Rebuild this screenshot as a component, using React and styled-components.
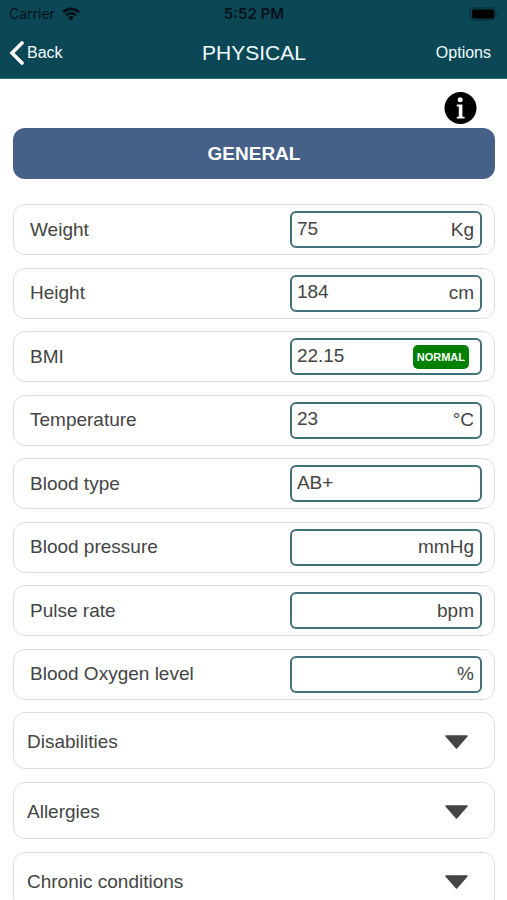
import React, { useState } from "react";
import styled, { createGlobalStyle } from "styled-components";

const GlobalStyle = createGlobalStyle`
  *, *::before, *::after { box-sizing: border-box; }
  body {
    margin: 0;
    background: #fff;
    color: #444;
    font-family: "Liberation Sans", Arial, sans-serif;
  }
  button, input { font: inherit; color: inherit; }
`;

const Screen = styled.div`
  display: flex;
  flex-direction: column;
  height: 100vh;
  overflow: hidden;
`;

const Header = styled.header`
  flex: none;
  background: #0c4756;
  border-bottom: 1px solid #35707c;
`;

const StatusBar = styled.div`
  display: grid;
  grid-template-columns: 1fr auto 1fr;
  align-items: center;
  height: 27px;
  padding: 0 8px 0 9px;
  color: #02121a;
  font-family: Inter, sans-serif;
  font-size: 14px;
  line-height: 18px;
`;

const Carrier = styled.div`
  display: flex;
  align-items: center;
  gap: 7px;
`;

const Clock = styled.time`
  font-size: 15px;
  font-weight: 600;
`;

const Battery = styled.svg`
  justify-self: end;
`;

const NavBar = styled.nav`
  display: grid;
  grid-template-columns: 1fr auto 1fr;
  align-items: center;
  height: 51px;
  padding: 0 16px 0 9px;
  color: #f0fbff;
`;

const NavButton = styled.button`
  display: flex;
  align-items: center;
  gap: 3px;
  justify-self: ${(p) => (p.$end ? "end" : "start")};
  padding: 0;
  border: 0;
  background: none;
  font-size: 16px;
  line-height: 24px;
  cursor: pointer;
`;

const Title = styled.h1`
  margin: 0;
  padding-left: 8px;
  font-size: 21px;
  font-weight: 400;
  line-height: 24px;
`;

const Content = styled.main`
  flex: 1;
  min-height: 0;
  padding: 12px 12px 24px 13px;
  overflow-y: auto;
  scrollbar-width: none;
`;

const InfoButton = styled.button`
  display: block;
  margin: 0 18px 3px auto;
  padding: 0;
  border: 0;
  background: none;
  cursor: pointer;

  svg { display: block; }
`;

const SectionTitle = styled.h2`
  margin: 0 0 25px;
  padding: 14px 14px 13px;
  border-radius: 12px;
  background: #466087;
  color: #fff;
  font-size: 19px;
  font-weight: 700;
  line-height: 24px;
  text-align: center;
`;

const Fields = styled.div`
  display: grid;
  align-content: space-between;
  min-height: 496px;
  margin-bottom: 12px;
`;

const Card = styled.div`
  border: 1px solid #dedede;
  border-radius: 12px;
  background: #fff;
  font-size: 19px;
  line-height: 24px;
`;

const FieldCard = styled(Card)`
  display: grid;
  grid-template-columns: minmax(0, 23fr) minmax(0, 17fr);
  align-items: center;
  height: 51px;
  padding: 0 12px 0 16px;
`;

const InputBox = styled.div`
  display: flex;
  align-items: center;
  height: 37px;
  padding: 0 6px 0 5px;
  border: 2px solid #417078;
  border-radius: 6px;
`;

const ValueInput = styled.input`
  flex: 1;
  min-width: 0;
  height: 24px;
  padding: 0 0 2px;
  border: 0;
  outline: 0;
  background: transparent;
`;

const Unit = styled.span`
  flex: none;
`;

const StatusTag = styled.span`
  flex: none;
  margin-right: 5px;
  padding: 0 4px;
  border-radius: 5px;
  background: #008000;
  color: #fff;
  font-size: 11px;
  font-weight: 700;
  line-height: 24px;
`;

const Groups = styled.div`
  display: grid;
  gap: 13px;
`;

const GroupButton = styled(Card).attrs({ as: "button", type: "button" })`
  display: flex;
  align-items: center;
  justify-content: space-between;
  width: 100%;
  height: 57px;
  padding: 2px 26px 0 13px;
  text-align: left;
  cursor: pointer;
`;

const Arrow = styled.svg`
  transform: ${(p) => (p.$open ? "rotate(180deg)" : "none")};
`;

const fields = [
  { id: "weight", label: "Weight", value: "75", unit: "Kg" },
  { id: "height", label: "Height", value: "184", unit: "cm" },
  { id: "bmi", label: "BMI", value: "22.15", tag: "NORMAL" },
  { id: "temperature", label: "Temperature", value: "23", unit: "°C" },
  { id: "blood-type", label: "Blood type", value: "AB+" },
  { id: "blood-pressure", label: "Blood pressure", value: "", unit: "mmHg" },
  { id: "pulse", label: "Pulse rate", value: "", unit: "bpm" },
  { id: "oxygen", label: "Blood Oxygen level", value: "", unit: "%" },
];

const groups = ["Disabilities", "Allergies", "Chronic conditions"];

function WifiIcon() {
  return (
    <svg width="18" height="14" viewBox="0 0 18 14" aria-hidden="true">
      <g fill="none" stroke="currentColor" strokeWidth="2.6">
        <path d="M1 5.2C5.5.8 12.5.8 17 5.2" />
        <path d="M4 8.3c2.8-2.8 7.2-2.8 10 0" />
      </g>
      <path d="M5.9 10.3c1.7-1.7 4.5-1.7 6.2 0L9 13.500z" fill="currentColor" />
    </svg>
  );
}

function Field({ id, label, value, unit, tag }) {
  return (
    <FieldCard>
      <label htmlFor={id}>{label}</label>
      <InputBox>
        <ValueInput id={id} type="text" defaultValue={value} />
        {unit && <Unit>{unit}</Unit>}
        {tag && <StatusTag>{tag}</StatusTag>}
      </InputBox>
    </FieldCard>
  );
}

function Group({ title }) {
  const [open, setOpen] = useState(false);
  return (
    <GroupButton aria-expanded={open} onClick={() => setOpen(!open)}>
      {title}
      <Arrow $open={open} width="23" height="14" viewBox="0 0 23 14" aria-hidden="true">
        <path d="M1 1h21L11.5 13z" fill="#444" stroke="#444" strokeWidth="1.5" strokeLinejoin="round" />
      </Arrow>
    </GroupButton>
  );
}

export default function App() {
  return (
    <Screen>
      <GlobalStyle />
      <Header>
        <StatusBar>
          <Carrier>
            Carrier
            <WifiIcon />
          </Carrier>
          <Clock>5:52 PM</Clock>
          <Battery width="30" height="14" viewBox="0 0 30 14" aria-hidden="true">
            <rect x="1" y="1" width="25" height="12" rx="4" fill="none" stroke="#08323e" strokeWidth="1.5" />
            <rect x="3" y="2.5" width="22" height="9" rx="1.5" fill="#000" />
            <path d="M28 5c1.6.8 1.6 3.2 0 4z" fill="#08323e" />
          </Battery>
        </StatusBar>
        <NavBar>
          <NavButton type="button">
            <svg width="15" height="24" viewBox="0 0 15 24" aria-hidden="true">
              <path d="M13 2L3 12l10 10" fill="none" stroke="#fff" strokeWidth="3.6" strokeLinecap="round" />
            </svg>
            Back
          </NavButton>
          <Title>PHYSICAL</Title>
          <NavButton type="button" $end>Options</NavButton>
        </NavBar>
      </Header>
      <Content>
        <InfoButton type="button" aria-label="Information">
          <svg width="33" height="34" viewBox="0 0 33 34" aria-hidden="true">
            <circle cx="16.5" cy="17" r="16" fill="#000" />
            <circle cx="16.2" cy="8.8" r="2.5" fill="#fff" />
            <path d="M12.8 13.6h5.6v12.2h2.2v1.6h-7.8v-1.600h2v-10.400h-2z" fill="#fff" />
          </svg>
        </InfoButton>
        <SectionTitle>GENERAL</SectionTitle>
        <Fields>
          {fields.map((field) => (
            <Field key={field.id} {...field} />
          ))}
        </Fields>
        <Groups>
          {groups.map((title) => (
            <Group key={title} title={title} />
          ))}
        </Groups>
      </Content>
    </Screen>
  );
}
